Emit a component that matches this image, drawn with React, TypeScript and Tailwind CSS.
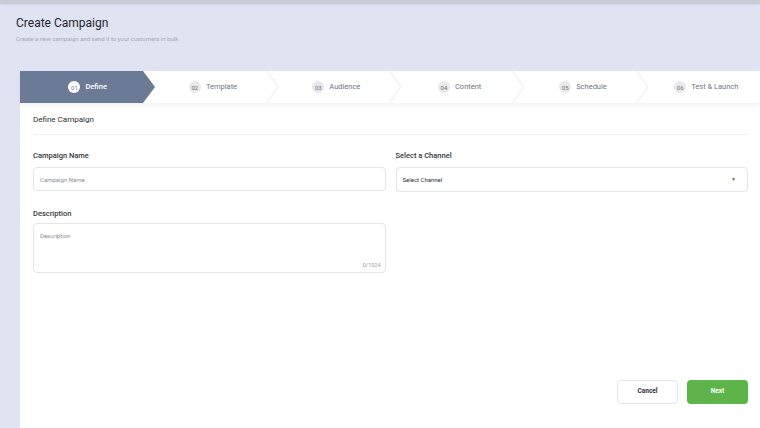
import React from "react";

const steps = [
  { n: "01", label: "Define" },
  { n: "02", label: "Template" },
  { n: "03", label: "Audience" },
  { n: "04", label: "Content" },
  { n: "05", label: "Schedule" },
  { n: "06", label: "Test & Launch" },
];

export default function App() {
  return (
    <div
      className="w-[760px] h-[428px] bg-[#dfe3f2] overflow-hidden flex flex-col"
      style={{ fontFamily: "Roboto, 'Noto Sans', sans-serif" }}
    >
      <div className="h-[3px] bg-[#c9ccd4] shadow-[0_1px_2px_rgba(0,0,0,0.15)] shrink-0" />
      <div className="pl-4 pt-[13px] h-[68px] shrink-0">
        <div className="text-[12px] leading-[14px] text-[#1f2430]">Create Campaign</div>
        <div className="text-[6px] leading-[8px] mt-[5px] text-[#a4a8b4]">
          Create a new campaign and send it to your customers in bulk
        </div>
      </div>
      <div className="ml-5 flex-1 flex flex-col bg-white">
        <div className="h-[32px] flex shrink-0 bg-white relative z-10 shadow-[0_3px_5px_rgba(0,0,0,0.05)]">
          {steps.map((s, i) => {
            const active = i === 0;
            return (
              <div key={s.n} className="relative flex-1 min-w-0 flex">
                {active && (
                  <div
                    className="absolute top-0 left-0 h-full w-[135px] bg-[#6b7b95]"
                    style={{ clipPath: "polygon(0 0, 123px 0, 135px 50%, 123px 100%, 0 100%)" }}
                  />
                )}
                {!active && (
                  <svg
                    className="absolute top-0 right-[-12px] z-10"
                    width="13"
                    height="32"
                    viewBox="0 0 13 32"
                  >
                    <path d="M0.5 0 L12 16 L0.5 32" fill="none" stroke="#e8eaef" strokeWidth="1" />
                  </svg>
                )}
                <div
                  className={`relative w-full flex items-center justify-center gap-[5px] ${
                    i === 0 ? "pl-3" : "pl-4"
                  }`}
                >
                  <span
                    className={`w-[12px] h-[12px] rounded-full flex items-center justify-center text-[6px] ${
                      active ? "bg-white text-[#6b7b95]" : "bg-[#e9e9ec] text-[#6d6f76]"
                    }`}
                  >
                    {s.n}
                  </span>
                  <span
                    className={`text-[7.5px] ${active ? "text-white font-medium" : "text-[#6f7582]"}`}
                  >
                    {s.label}
                  </span>
                </div>
              </div>
            );
          })}
        </div>
        <div className="pl-[13px] pr-3 flex flex-col">
          <div className="h-[32px] flex items-center border-b border-[#eeeff1] text-[8px] text-[#2d2f35] pt-[3px]">
            Define Campaign
          </div>
          <div className="grid grid-cols-2 gap-x-[10px] mt-[16px]">
            <div className="flex flex-col">
              <div className="text-[7.5px] text-[#34363c] font-medium leading-[10px]">Campaign Name</div>
              <div className="mt-[6px] h-[24px] border border-[#e3e5ea] rounded-[4px] flex items-center pl-[6px] text-[6px] text-[#8a8d95]">
                Campaign Name
              </div>
            </div>
            <div className="flex flex-col">
              <div className="text-[7.5px] text-[#34363c] font-medium leading-[10px]">Select a Channel</div>
              <div className="mt-[6px] h-[25px] border border-[#e3e5ea] rounded-[4px] flex items-center justify-between pl-[6px] pr-[11px] text-[6px] text-[#2d2f35]">
                <span>Select Channel</span>
                <span className="text-[5px] text-[#666]">▼</span>
              </div>
            </div>
            <div className="flex flex-col mt-[17px]">
              <div className="text-[7.5px] text-[#34363c] font-medium leading-[10px]">Description</div>
              <div className="mt-[4px] h-[50px] border border-[#e3e5ea] rounded-[4px] flex flex-col justify-between pl-[6px] pr-[4px] pt-[7px] pb-[3px] text-[6px] text-[#8a8d95]">
                <span>Description</span>
                <span className="self-end text-[5.5px] text-[#9a9ca3]">0/1024</span>
              </div>
            </div>
          </div>
          <div className="flex justify-end gap-[9px] mt-[107px]">
            <button className="w-[61px] h-[24px] rounded-[4px] border border-[#e3e5ea] bg-white text-[6.5px] font-bold text-[#2d2f35]">
              Cancel
            </button>
            <button className="w-[61px] h-[24px] rounded-[4px] bg-[#5db449] text-[6.5px] font-bold text-white">
              Next
            </button>
          </div>
        </div>
      </div>
    </div>
  );
}
